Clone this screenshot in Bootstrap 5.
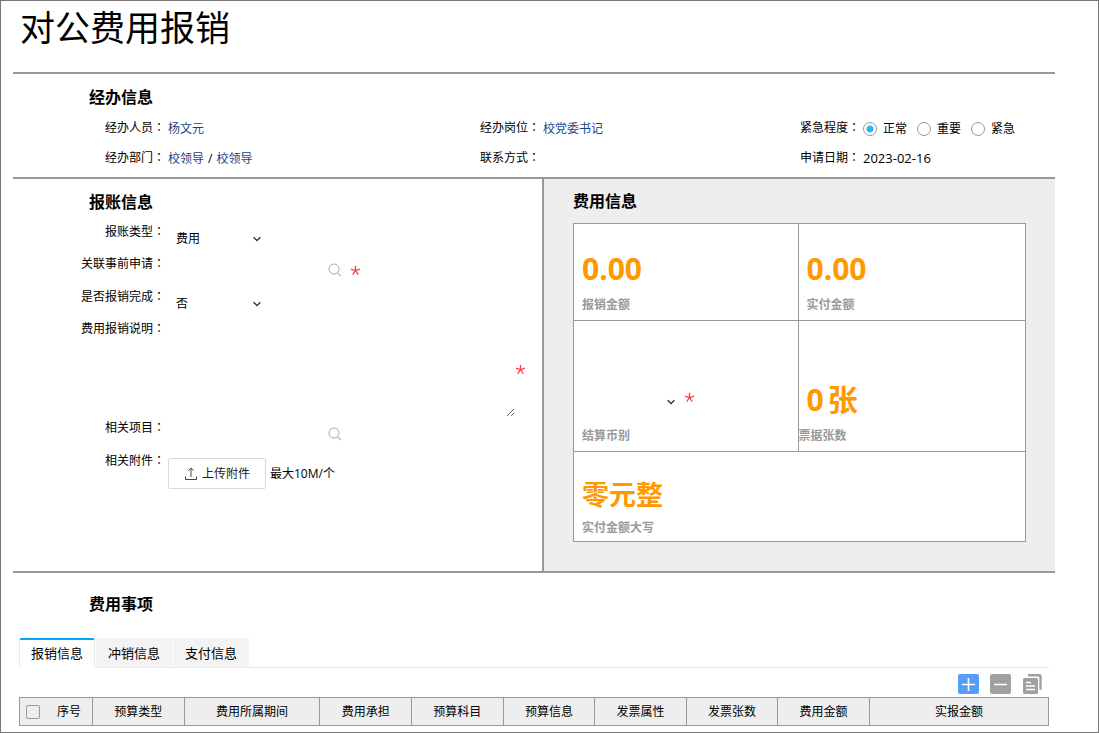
<!DOCTYPE html>
<html lang="zh-CN">
<head>
<meta charset="utf-8">
<meta name="viewport" content="width=device-width, initial-scale=1">
<title>对公费用报销</title>
<link href="https://cdn.jsdelivr.net/npm/bootstrap@5.3.0/dist/css/bootstrap.min.css" rel="stylesheet">
<style>
  body { font-family: "Open Sans", "Noto Sans CJK SC", sans-serif; font-size: 12px; line-height: 18px; color: #000; background: #fff; }
  .sheet { min-height: 100vh; border: 1px solid #777; padding: 0 43px 6px 12px; }
  .sheet-title { font-size: 35px; line-height: 54px; font-weight: 400; margin: 0; padding: 0 7px 17px; }
  .sec-title { font-size: 16px; line-height: 24px; font-weight: 700; margin: 0; }
  .rule-top { border-top: 2px solid #999; }
  .indent { padding-left: 76px; padding-top: 11px; }

  /* label + value pairs */
  .info-grid { display: grid; grid-template-columns: 375fr 320fr 347fr; padding: 3px 0 5px; }
  .pair { display: flex; gap: 3px; }
  .pair-label { flex: none; width: 152px; text-align: right; white-space: nowrap; }
  .cn-colon { font-family: "Noto Sans CJK TC", sans-serif; }
  .info-grid .pair { height: 30px; align-items: center; }
  .info-grid .pair-value { padding-top: 4px; white-space: nowrap; }
  .pair-value a { color: #1b3f8b; text-decoration: none; }
  .slash { margin: 0 4px; }
  .info-grid .date-text { font-size: 13px; padding-top: 2px; }
  .levels label { margin: 0 10px 0 6px; }
  .round-radio { appearance: none; width: 14px; height: 14px; margin: 0; border: 1px solid #999; border-radius: 50%; background: #fff; }
  .round-radio:checked { background: radial-gradient(circle, #2db7f5 0 3px, #fff 4px); }

  /* claim form and fee summary */
  .split { display: grid; grid-template-columns: 531fr 511fr; }
  .claim { border-right: 2px solid #999; }
  .claim .sec-title { padding-bottom: 1px; }
  .fees { background: #eee; padding: 10px 29px 29px; }
  .line-select { height: 32px; }
  .line-lookup { height: 33px; }
  .line-area { height: 99px; }
  .split .pair { align-items: flex-start; }
  .split .pair-label { padding-top: 7px; }
  .bare { border: 0; background: transparent; color: #000; padding: 0; outline: 0; font-size: 12px; }
  .drop { position: relative; }
  .drop select { appearance: none; width: 100px; height: 20px; padding-left: 8px; line-height: 20px; }
  .drop svg { position: absolute; right: 7px; top: 7px; pointer-events: none; }
  .line-select .drop { align-self: flex-end; margin-bottom: -2px; }
  .lookup { align-self: flex-end; display: flex; align-items: center; height: 20px; }
  .lookup input { width: 160px; height: 20px; }
  .icon-btn { border: 0; background: none; padding: 0; display: flex; }
  .star { flex: none; display: block; }
  .note { width: 347px; height: 98px; margin: 7px 0 -6px; resize: both; display: block; }
  .upload-row { margin-top: 14px; }
  .upload { height: 31px; width: 98px; border: 1px solid #d9d9d9; border-radius: 2px; background: #fff; color: #222; padding: 0; }

  .fee-grid { display: grid; grid-template-columns: 225fr 228fr; grid-template-rows: 97px 131px 91px; border: 1px solid #999; border-width: 0 0 0 1px; background: #fff; color: #999; font-weight: 700; margin-top: 10px; }
  .fee-cell { border: 1px solid #999; border-width: 1px 1px 0 0; padding: 0 8px 6px; display: flex; flex-direction: column; justify-content: flex-end; }
  .fee-wide { grid-column: 1 / 3; border-bottom-width: 1px; padding-bottom: 4px; }
  .amount { font-size: 30px; line-height: 36px; color: #ff9900; margin-bottom: 9px; }
  .amount-cn { font-size: 27px; margin-bottom: 6px; }
  .currency { height: 20px; margin-bottom: 15px; gap: 2px; }

  /* detail tabs and table */
  .detail { padding: 0 6px; }
  .detail-head { padding-top: 19px; }
  .detail-tabs { border-bottom: 1px solid #e9e9e9; gap: 1px; margin-top: 22px; }
  .detail-tabs button { height: 29px; width: 76px; border: 0; padding: 0; font-size: 13px; background: #f3f3f3; color: #000; }
  .detail-tabs .active { height: 30px; padding-bottom: 3px; margin-bottom: -1px; background: #fff; border: solid #e9e9e9; border-width: 0 1px; border-top: 2px solid #00a9ff; border-radius: 2px 2px 0 0; }
  .tools { gap: 11px; padding: 6px 6px 3px; }
  .items { width: 100%; table-layout: fixed; border-collapse: collapse; }
  .items th { height: 28px; border: 1px solid #999; background: #eee; text-align: center; font-weight: 400; padding: 0; white-space: nowrap; }
  .w-seq { width: 7.1%; } .w-std { width: 8.9%; } .w-period { width: 13.2%; }
  .seq-head { padding: 0 11px 0 6px; }
  .tick { appearance: none; width: 14px; height: 14px; margin: 0; border: 1px solid #999; border-radius: 2px; background: #eee; }
</style>
</head>
<body>
<svg width="0" height="0" class="position-absolute" aria-hidden="true">
  <symbol id="i-star" viewBox="0 0 11 11"><path d="M5.5 5.7V.8M5.5 5.7L.9 4.2M5.5 5.7L10.1 4.2M5.5 5.7L2.7 9.7M5.5 5.7L8.3 9.7" stroke="#f5424a" stroke-width="1.3" fill="none"/></symbol>
  <symbol id="i-chev" viewBox="0 0 8 6"><path d="M.6 1.2L4 4.5 7.4 1.2" stroke="#333" stroke-width="1.3" fill="none"/></symbol>
  <symbol id="i-find" viewBox="0 0 14 14"><circle cx="6" cy="6" r="5" stroke="#aaa" fill="none"/><path d="M9.6 9.8l3.4 3.3" stroke="#aaa" stroke-width="1.1"/></symbol>
</svg>
<main class="sheet">
  <h1 class="sheet-title">对公费用报销</h1>

  <section class="rule-top">
    <h2 class="sec-title indent">经办信息</h2>
    <div class="info-grid">
      <div class="pair"><span class="pair-label">经办人员<span class="cn-colon" lang="zh-TW">：</span></span><span class="pair-value"><a href="#">杨文元</a></span></div>
      <div class="pair"><span class="pair-label">经办岗位<span class="cn-colon" lang="zh-TW">：</span></span><span class="pair-value"><a href="#">校党委书记</a></span></div>
      <div class="pair"><span class="pair-label">紧急程度<span class="cn-colon" lang="zh-TW">：</span></span>
        <div class="pair-value levels d-flex align-items-center">
          <input class="round-radio" type="radio" name="level" id="lv1" checked><label for="lv1">正常</label>
          <input class="round-radio" type="radio" name="level" id="lv2"><label for="lv2">重要</label>
          <input class="round-radio" type="radio" name="level" id="lv3"><label for="lv3">紧急</label>
        </div>
      </div>
      <div class="pair"><span class="pair-label">经办部门<span class="cn-colon" lang="zh-TW">：</span></span><span class="pair-value"><a href="#">校领导</a><span class="slash">/</span><a href="#">校领导</a></span></div>
      <div class="pair"><span class="pair-label">联系方式<span class="cn-colon" lang="zh-TW">：</span></span></div>
      <div class="pair"><span class="pair-label">申请日期<span class="cn-colon" lang="zh-TW">：</span></span><span class="pair-value date-text">2023-02-16</span></div>
    </div>
  </section>

  <div class="split rule-top">
    <section class="claim">
      <h2 class="sec-title indent">报账信息</h2>
      <div class="pair line-select">
        <label class="pair-label" for="kind">报账类型<span class="cn-colon" lang="zh-TW">：</span></label>
        <div class="drop"><select class="bare" id="kind"><option>费用</option></select><svg width="8" height="6"><use href="#i-chev"/></svg></div>
      </div>
      <div class="pair line-lookup">
        <label class="pair-label" for="pre">关联事前申请<span class="cn-colon" lang="zh-TW">：</span></label>
        <div class="lookup"><input class="bare" id="pre" type="text"><button class="icon-btn" type="button" aria-label="搜索"><svg width="14" height="14"><use href="#i-find"/></svg></button><svg class="star ms-2" width="11" height="11"><use href="#i-star"/></svg></div>
      </div>
      <div class="pair line-select">
        <label class="pair-label" for="done">是否报销完成<span class="cn-colon" lang="zh-TW">：</span></label>
        <div class="drop"><select class="bare" id="done"><option>否</option></select><svg width="8" height="6"><use href="#i-chev"/></svg></div>
      </div>
      <div class="pair line-area">
        <label class="pair-label" for="memo">费用报销说明<span class="cn-colon" lang="zh-TW">：</span></label>
        <div class="d-flex align-items-center"><textarea class="bare note" id="memo"></textarea><svg class="star mt-3" width="11" height="11"><use href="#i-star"/></svg></div>
      </div>
      <div class="pair line-lookup">
        <label class="pair-label" for="proj">相关项目<span class="cn-colon" lang="zh-TW">：</span></label>
        <div class="lookup"><input class="bare" id="proj" type="text"><button class="icon-btn" type="button" aria-label="搜索"><svg width="14" height="14"><use href="#i-find"/></svg></button></div>
      </div>
      <div class="pair">
        <span class="pair-label">相关附件<span class="cn-colon" lang="zh-TW">：</span></span>
        <div class="upload-row d-flex align-items-center">
          <button class="upload d-flex align-items-center justify-content-center gap-1" type="button">
            <svg width="14" height="14" viewBox="0 0 14 14" fill="none" stroke="#444"><path d="M1.5 9.5v3h11v-3M7 10V1.2M4.4 3.6L7 1l2.6 2.6"/></svg>上传附件</button>
          <span class="ms-1">最大10M/个</span>
        </div>
      </div>
    </section>

    <section class="fees">
      <h2 class="sec-title">费用信息</h2>
      <div class="fee-grid">
        <div class="fee-cell"><div class="amount">0.00</div><div>报销金额</div></div>
        <div class="fee-cell"><div class="amount">0.00</div><div>实付金额</div></div>
        <div class="fee-cell">
          <div class="currency d-flex"><div class="drop"><select class="bare" id="cur" aria-label="结算币别"><option></option></select><svg width="8" height="6"><use href="#i-chev"/></svg></div><svg class="star" width="11" height="11"><use href="#i-star"/></svg></div>
          <label for="cur">结算币别</label>
        </div>
        <div class="fee-cell px-0"><div class="amount d-flex gap-1 ps-2"><span>0</span><span>张</span></div><div>票据张数</div></div>
        <div class="fee-cell fee-wide"><div class="amount amount-cn">零元整</div><div>实付金额大写</div></div>
      </div>
    </section>
  </div>

  <section class="rule-top">
    <h2 class="sec-title indent detail-head">费用事项</h2>
    <div class="detail">
      <div class="detail-tabs d-flex" role="tablist">
        <button class="active" type="button" role="tab" aria-selected="true">报销信息</button>
        <button type="button" role="tab">冲销信息</button>
        <button type="button" role="tab">支付信息</button>
      </div>
      <div class="tools d-flex justify-content-end">
        <button class="icon-btn" type="button" aria-label="添加"><svg width="21" height="20" viewBox="0 0 21 20"><rect width="21" height="20" rx="2" fill="#549df8"/><path d="M4 10.5h13M10.5 4v13" stroke="#fff" stroke-width="1.6"/></svg></button>
        <button class="icon-btn" type="button" aria-label="删除"><svg width="21" height="20" viewBox="0 0 21 20"><rect width="21" height="20" rx="2" fill="#a0a0a0"/><path d="M4 10.5h13" stroke="#fff" stroke-width="1.6"/></svg></button>
        <button class="icon-btn" type="button" aria-label="复制"><svg width="21" height="20" viewBox="0 0 21 20"><path d="M6 1.2h11q1.5 0 1.5 1.5v13" fill="none" stroke="#a0a0a0" stroke-width="2.4"/><rect x="1" y="4" width="15" height="16" rx="1.5" fill="#a0a0a0"/><path d="M4 8.5h5M4 12h9M4 15.5h9" stroke="#fff" stroke-width="1.4"/></svg></button>
      </div>
      <table class="items">
        <colgroup><col class="w-seq"><col class="w-std"><col class="w-period"><col class="w-std"><col class="w-std"><col class="w-std"><col class="w-std"><col class="w-std"><col class="w-std"><col></colgroup>
        <thead><tr>
          <th scope="col"><div class="seq-head d-flex align-items-center justify-content-between"><input class="tick" type="checkbox" aria-label="全选"><span>序号</span></div></th>
          <th scope="col">预算类型</th><th scope="col">费用所属期间</th><th scope="col">费用承担</th><th scope="col">预算科目</th><th scope="col">预算信息</th><th scope="col">发票属性</th><th scope="col">发票张数</th><th scope="col">费用金额</th><th scope="col">实报金额</th>
        </tr></thead>
      </table>
    </div>
  </section>
</main>
<script src="https://cdn.jsdelivr.net/npm/bootstrap@5.3.0/dist/js/bootstrap.bundle.min.js"></script>
</body>
</html>
